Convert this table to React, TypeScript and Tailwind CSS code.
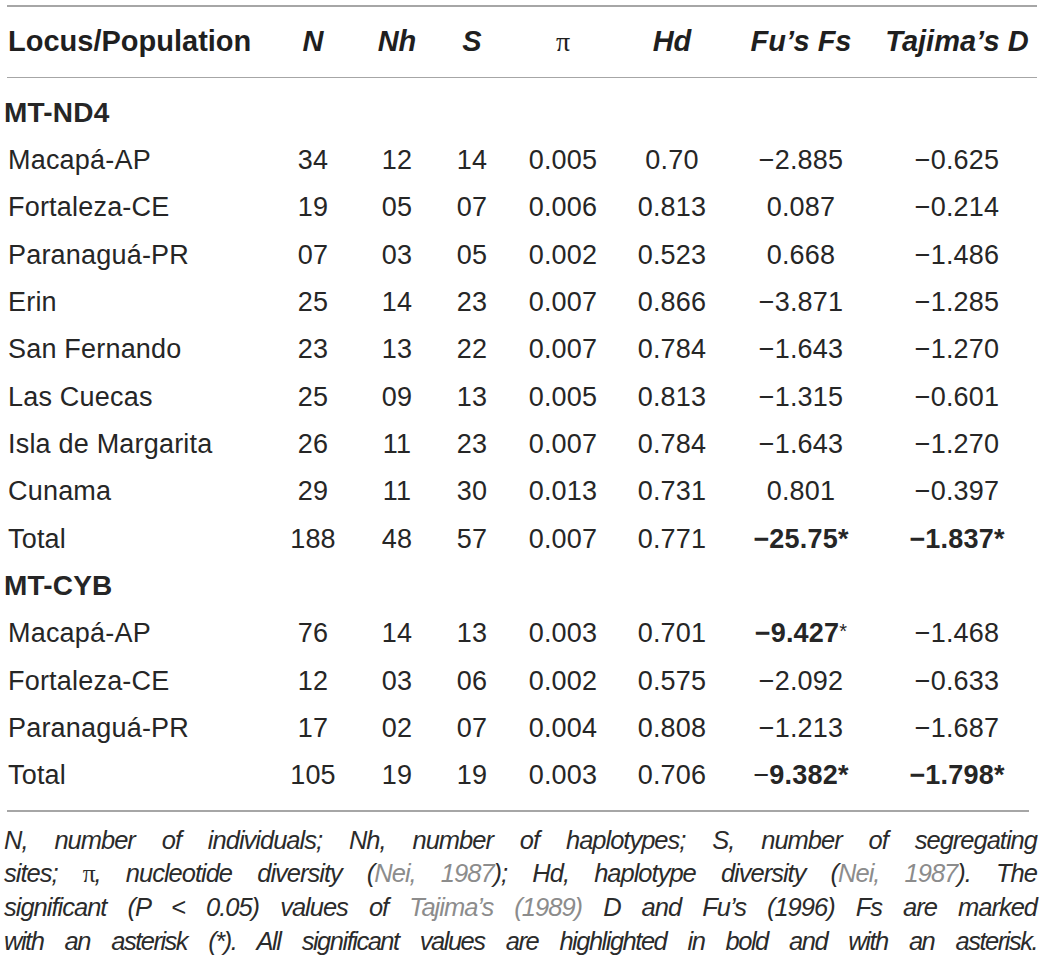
import React from "react";

type Cell = React.ReactNode;
type Row = { name: string; cells: Cell[] };

const M = "\u2212";

const B = ({ children }: { children: React.ReactNode }) => (
  <span className="font-bold">{children}</span>
);

const nd4: Row[] = [
  { name: "Macapá-AP", cells: ["34", "12", "14", "0.005", "0.70", `${M}2.885`, `${M}0.625`] },
  { name: "Fortaleza-CE", cells: ["19", "05", "07", "0.006", "0.813", "0.087", `${M}0.214`] },
  { name: "Paranaguá-PR", cells: ["07", "03", "05", "0.002", "0.523", "0.668", `${M}1.486`] },
  { name: "Erin", cells: ["25", "14", "23", "0.007", "0.866", `${M}3.871`, `${M}1.285`] },
  { name: "San Fernando", cells: ["23", "13", "22", "0.007", "0.784", `${M}1.643`, `${M}1.270`] },
  { name: "Las Cuecas", cells: ["25", "09", "13", "0.005", "0.813", `${M}1.315`, `${M}0.601`] },
  { name: "Isla de Margarita", cells: ["26", "11", "23", "0.007", "0.784", `${M}1.643`, `${M}1.270`] },
  { name: "Cunama", cells: ["29", "11", "30", "0.013", "0.731", "0.801", `${M}0.397`] },
  {
    name: "Total",
    cells: ["188", "48", "57", "0.007", "0.771", <B key="a">{M}25.75*</B>, <B key="b">{M}1.837*</B>],
  },
];

const cyb: Row[] = [
  {
    name: "Macapá-AP",
    cells: [
      "76",
      "14",
      "13",
      "0.003",
      "0.701",
      <span key="a">
        <B>{M}9.427</B>
        <span className="relative -top-[4px] text-[20px]">*</span>
      </span>,
      `${M}1.468`,
    ],
  },
  { name: "Fortaleza-CE", cells: ["12", "03", "06", "0.002", "0.575", `${M}2.092`, `${M}0.633`] },
  { name: "Paranaguá-PR", cells: ["17", "02", "07", "0.004", "0.808", `${M}1.213`, `${M}1.687`] },
  {
    name: "Total",
    cells: [
      "105",
      "19",
      "19",
      "0.003",
      "0.706",
      <span key="a">
        {M}
        <B>9.382*</B>
      </span>,
      <B key="b">{M}1.798*</B>,
    ],
  },
];

const grid =
  "grid grid-cols-[270px_86px_82px_68px_114px_104px_154px_158px] items-center";

function DataRow({ r }: { r: Row }) {
  return (
    <div className={`${grid} h-[47.36px]`}>
      <div className="pl-[8px] whitespace-nowrap">{r.name}</div>
      {r.cells.map((c, i) => (
        <div key={i} className="text-center whitespace-nowrap">
          {c}
        </div>
      ))}
    </div>
  );
}

function Section({ title }: { title: string }) {
  return (
    <div className="h-[47.36px] flex items-center pl-[4px] font-bold text-[28px]">
      {title}
    </div>
  );
}

const Gray = ({ children }: { children: React.ReactNode }) => (
  <span className="text-[#8c8c8c]">{children}</span>
);

export default function App() {
  return (
    <div className="w-[1042px] h-[971px] bg-white text-[#262626] font-['Liberation_Sans',Arial,sans-serif] overflow-hidden">
      <div className="pt-[5px] w-[1037px]">
        <div className="ml-[7px] h-[1.5px] bg-[#a6a6a6]" />
        <div className={`${grid} h-[70px] font-bold italic text-[29px] text-[#1f1f1f]`}>
          <div className="pl-[8px] not-italic">Locus/Population</div>
          <div className="text-center">N</div>
          <div className="text-center">Nh</div>
          <div className="text-center">S</div>
          <div className="text-center not-italic font-normal font-['Liberation_Serif',serif] text-[28px]">π</div>
          <div className="text-center">Hd</div>
          <div className="text-center whitespace-nowrap">Fu’s Fs</div>
          <div className="text-center whitespace-nowrap">Tajima’s D</div>
        </div>
        <div className="ml-[7px] h-[1.5px] bg-[#a6a6a6]" />
        <div className="pt-[11px] pb-[11px] text-[27px] tracking-[0.2px]">
          <Section title="MT-ND4" />
          {nd4.map((r, i) => (
            <DataRow key={"a" + i} r={r} />
          ))}
          <Section title="MT-CYB" />
          {cyb.map((r, i) => (
            <DataRow key={"b" + i} r={r} />
          ))}
        </div>
        <div className="ml-[7px] mr-[8px] h-[1.5px] bg-[#a6a6a6]" />
        <div className="pl-[4px] pt-[12px] italic text-[25.5px] leading-[33.6px] tracking-[-1px] text-[#2b2b2b] [text-align:justify] [text-align-last:justify]">
          <div className="whitespace-nowrap">N, number of individuals; Nh, number of haplotypes; S, number of segregating</div>
          <div className="whitespace-nowrap">
            sites; <span className="not-italic font-['Liberation_Serif',serif]">π</span>, nucleotide diversity (
            <Gray>Nei, 1987</Gray>); Hd, haplotype diversity (<Gray>Nei, 1987</Gray>). The
          </div>
          <div className="whitespace-nowrap">
            significant (P &lt; 0.05) values of <Gray>Tajima’s (1989)</Gray> D and Fu’s (1996) Fs are marked
          </div>
          <div className="whitespace-nowrap tracking-[-1.5px]">
            with an asterisk (*). All significant values are highlighted in bold and with an asterisk.
          </div>
        </div>
      </div>
    </div>
  );
}
